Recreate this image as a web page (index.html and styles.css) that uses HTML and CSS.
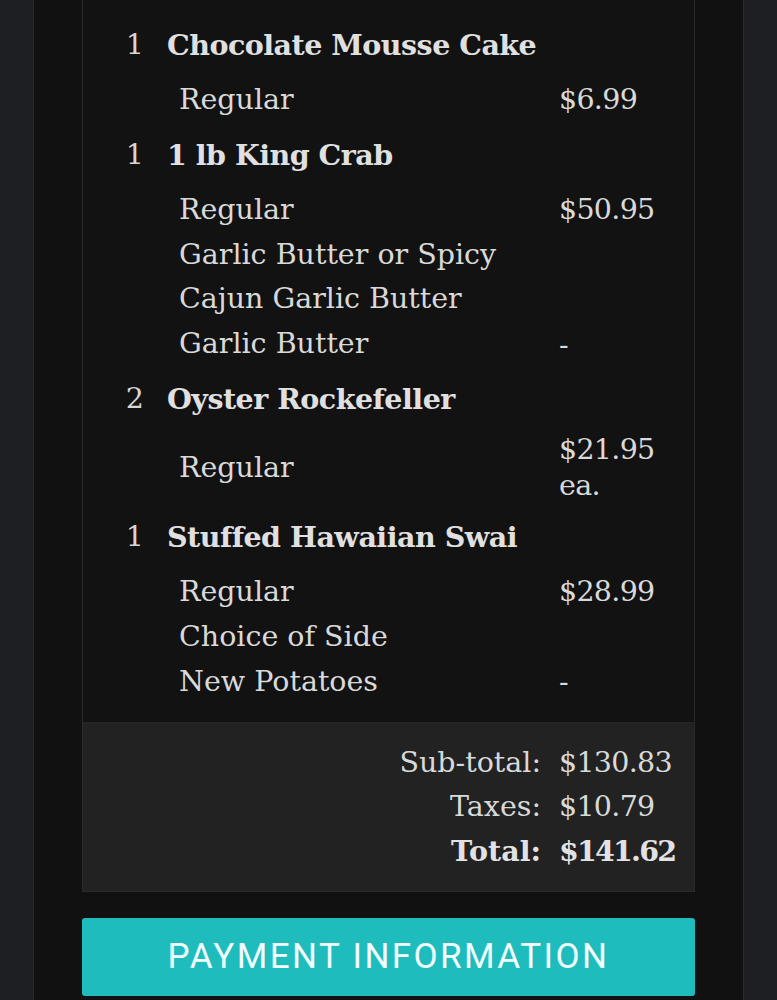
FILE: index.html
```html
<!DOCTYPE html>
<html lang="en">
<head>
<meta charset="utf-8">
<title>Order summary</title>
<link rel="stylesheet" href="styles.css">
</head>
<body>
<div class="panel">
  <div class="card">
    <div class="items">
      <div class="head"><span class="qty">1</span><span class="name">Chocolate Mousse Cake</span></div>
      <div class="sub"><span class="opt">Regular</span><span class="price">$6.99</span></div>

      <div class="head"><span class="qty">1</span><span class="name">1 lb King Crab</span></div>
      <div class="sub"><span class="opt">Regular</span><span class="price">$50.95</span></div>
      <div class="sub"><span class="opt">Garlic Butter or Spicy</span><span class="price"></span></div>
      <div class="sub"><span class="opt">Cajun Garlic Butter</span><span class="price"></span></div>
      <div class="sub"><span class="opt">Garlic Butter</span><span class="price">-</span></div>

      <div class="head"><span class="qty">2</span><span class="name">Oyster Rockefeller</span></div>
      <div class="sub"><span class="opt">Regular</span><span class="price">$21.95 ea.</span></div>

      <div class="head"><span class="qty">1</span><span class="name">Stuffed Hawaiian Swai</span></div>
      <div class="sub"><span class="opt">Regular</span><span class="price">$28.99</span></div>
      <div class="sub"><span class="opt">Choice of Side</span><span class="price"></span></div>
      <div class="sub"><span class="opt">New Potatoes</span><span class="price">-</span></div>
    </div>
    <div class="totals">
      <div class="trow"><span class="tlabel">Sub-total:</span><span class="tval">$130.83</span></div>
      <div class="trow"><span class="tlabel">Taxes:</span><span class="tval">$10.79</span></div>
      <div class="trow grand"><span class="tlabel">Total:</span><span class="tval">$141.62</span></div>
    </div>
  </div>
  <button class="pay" type="button">PAYMENT INFORMATION</button>
</div>
</body>
</html>
```
FILE: styles.css
```css
html, body {
  margin: 0;
  padding: 0;
}
body {
  background: #1e1f22;
  font-family: "DejaVu Serif", "Liberation Serif", serif;
  font-size: 28.5px;
  color: #d9d9d9;
}
.panel {
  margin: 0 33px;
  min-height: 1000px;
  background: #111111;
  border-left: 1px solid #2a2b2e;
  border-right: 1px solid #2a2b2e;
  padding: 0 48px;
}
.card {
  border: 1px solid #2a2a2a;
  border-top: none;
  background: #121212;
}
.items {
  padding: 12px 0 17.5px;
}
.head, .sub {
  display: grid;
  grid-template-columns: 84px 1fr 133px;
  align-items: center;
}
.head {
  padding: 10.5px 0;
  line-height: 44.5px;
}
.qty {
  text-align: right;
  padding-right: 23px;
  color: #d6d6d6;
}
.name {
  grid-column: 2 / 4;
  font-weight: bold;
  color: #e0e0e0;
  letter-spacing: -0.5px;
}
.sub {
  line-height: 44.8px;
}
.opt {
  grid-column: 2;
  padding-left: 12px;
}
.price {
  grid-column: 3;
  line-height: 36px;
  padding-right: 20px;
  margin-left: -2px;
  letter-spacing: -0.7px;
}
.totals {
  background: #222222;
  border-top: 1px solid #262626;
  padding: 18px 0 18px;
}
.trow {
  display: grid;
  grid-template-columns: 1fr 133px;
  line-height: 44px;
}
.tlabel {
  text-align: right;
  padding-right: 20px;
}
.tval {
  margin-left: -2px;
  letter-spacing: -0.7px;
}
.grand {
  font-weight: bold;
  color: #e2e2e2;
}
.grand .tval {
  letter-spacing: -1.8px;
}
.pay {
  display: block;
  width: 100%;
  margin-top: 26px;
  height: 78px;
  border: none;
  border-radius: 3px;
  background: #1fbcbe;
  color: #f2fefe;
  font-family: Roboto, "Noto Sans", sans-serif;
  font-size: 35px;
  letter-spacing: 2.4px;
  padding: 0;
  cursor: pointer;
}
```
